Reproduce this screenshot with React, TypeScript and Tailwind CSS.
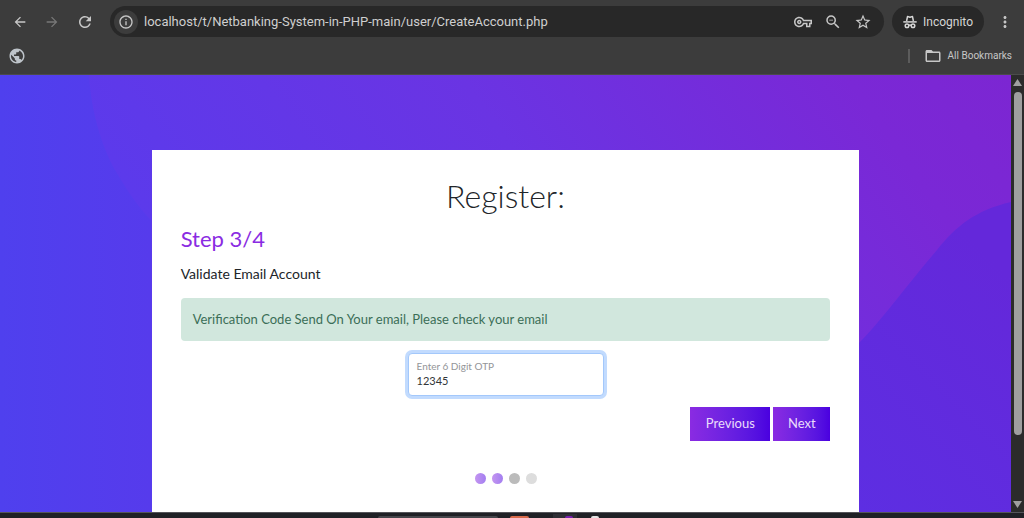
import { useState } from "react";
import {
  MdArrowBack,
  MdArrowForward,
  MdFolderOpen,
  MdInfoOutline,
  MdMoreVert,
  MdOutlineVpnKey,
  MdPublic,
  MdRefresh,
  MdStarBorder,
  MdZoomOut,
} from "react-icons/md";

const steps = [
  { id: 1, color: "bg-linear-to-r from-[#c495f0] to-[#a37ef0]" },
  { id: 2, color: "bg-linear-to-r from-[#c495f0] to-[#a37ef0]" },
  { id: 3, color: "bg-[#bbbbbb]" },
  { id: 4, color: "bg-[#dddddd]" },
];

function IncognitoIcon() {
  return (
    <svg viewBox="0 0 14 14" className="size-3.5" fill="none" stroke="currentColor" strokeWidth="1.5">
      <path d="M3.600 6 4.500 1.600 7 2.200l2.500-.6.9 4.400" strokeLinejoin="round" />
      <path d="M.3 6.900h13.400" />
      <circle cx="4" cy="10.800" r="1.800" />
      <circle cx="10" cy="10.800" r="1.800" />
      <path d="M5.800 10.400q1.200-.6 2.400 0" />
    </svg>
  );
}

function BrowserBar() {
  const [url, setUrl] = useState("localhost/t/Netbanking-System-in-PHP-main/user/CreateAccount.php");

  return (
    <header className="bg-[#3c3c3c] border-b border-[#4b4b4b] text-[#c7c7c7] font-[Roboto,sans-serif]">
      {/* Address row */}
      <div className="flex items-center pt-1.5 px-3">
        <button aria-label="Back" className="w-4 mr-4"><MdArrowBack className="size-4" /></button>
        <button aria-label="Forward" className="w-4 mr-4 text-[#777777]"><MdArrowForward className="size-4" /></button>
        <button aria-label="Reload" className="w-4 mr-4"><MdRefresh className="size-[18px]" /></button>
        <div className="flex flex-1 items-center h-[31px] rounded-full bg-[#282828] pl-1 pr-3 ml-0.5">
          <button aria-label="Site information" className="flex size-6 items-center justify-center rounded-full bg-[#3c3c3c]">
            <MdInfoOutline className="size-4" />
          </button>
          <input
            type="text"
            aria-label="Address"
            value={url}
            onChange={e => setUrl(e.target.value)}
            className="flex-1 min-w-0 ml-1.5 bg-transparent text-[13px] text-[#cfcfcf] focus:outline-none"
          />
          <div className="flex items-center gap-3">
            <button aria-label="Passwords"><MdOutlineVpnKey className="size-[18px]" /></button>
            <button aria-label="Zoom"><MdZoomOut className="size-[18px]" /></button>
            <button aria-label="Bookmark this page"><MdStarBorder className="size-[18px]" /></button>
          </div>
        </div>
        <button className="flex items-center gap-1.5 h-[31px] ml-2 rounded-full bg-[#282828] px-[11px] text-xs text-[#d6d6d6]">
          <IncognitoIcon />
          Incognito
        </button>
        <button aria-label="Menu" className="ml-3 -mr-0.5"><MdMoreVert className="size-[18px]" /></button>
      </div>

      {/* Bookmarks row */}
      <div className="flex items-center justify-between h-[37px] px-2">
        <button aria-label="Bookmark"><MdPublic className="size-[18px] text-[#bdc3c9]" /></button>
        <div className="flex items-center pr-1">
          <span className="w-0.5 h-3.5 mr-3.5 bg-[#5c5c5c]" />
          <button className="flex items-center gap-1.5 text-[10px]">
            <MdFolderOpen className="size-[18px]" />
            All Bookmarks
          </button>
        </div>
      </div>
    </header>
  );
}

function Backdrop() {
  return (
    <svg viewBox="0 0 1011 437" preserveAspectRatio="none" className="absolute inset-0 size-full" aria-hidden="true">
      <defs>
        <linearGradient id="base" x1="0" y1="0.3" x2="1" y2="0">
          <stop offset="0" stopColor="#573cee" />
          <stop offset="0.5" stopColor="#6a34e3" />
          <stop offset="0.85" stopColor="#7a28d6" />
          <stop offset="1" stopColor="#7c26d2" />
        </linearGradient>
        <linearGradient id="left" x1="0" y1="0" x2="1" y2="0">
          <stop offset="0" stopColor="#4f40ee" />
          <stop offset="1" stopColor="#563bec" />
        </linearGradient>
        <linearGradient id="right" x1="0" y1="1" x2="0.5" y2="0">
          <stop offset="0" stopColor="#5d2ee2" />
          <stop offset="1" stopColor="#6428da" />
        </linearGradient>
      </defs>
      <path fill="url(#base)" d="M0 0h1011v437H0z" />
      <path fill="url(#left)" d="M0 0h89c2 35 12 70 26 95 12 20 22 36 36 50v292H0z" />
      <path fill="url(#right)" d="M1011 127c-35 8-55 24-74 48-30 35-55 70-78 93v169h152z" />
    </svg>
  );
}

function Scrollbar() {
  return (
    <div className="flex flex-col items-center w-[13px] py-1 bg-[#2b2b2b]" aria-hidden="true">
      <svg viewBox="0 0 9 7" className="w-[9px] h-[7px]"><path d="M4.500 0 9 7H0z" fill="#9f9f9f" /></svg>
      <div className="flex-1 w-2 my-1.5">
        <div className="h-[85%] rounded-full bg-[#9f9f9f]" />
      </div>
      <svg viewBox="0 0 9 7" className="w-[9px] h-[7px]"><path d="M0 0h9L4.500 7z" fill="#9f9f9f" /></svg>
    </div>
  );
}

function Taskbar() {
  return (
    <footer className="flex items-end h-1.5 overflow-hidden border-t border-[#55555a] bg-[#202126]" aria-hidden="true">
      <div className="flex w-full items-end justify-center pr-12">
        <span className="w-30 h-0.5 rounded-t-full bg-[#45464b]" />
        <span className="w-[19px] h-0.5 ml-3 rounded-t-sm bg-[#d96b4c]" />
        <span className="flex items-end justify-end w-6 h-1 ml-6 pr-1 bg-[#2e2e34]">
          <span className="w-2 h-0.5 rounded-t-full bg-[#7a1fb0]" />
        </span>
        <span className="w-2 h-0.5 ml-3.5 rounded-t-full bg-[#e4e4e4]" />
      </div>
    </footer>
  );
}

export default function App() {
  const [otp, setOtp] = useState("12345");

  return (
    <div className="flex flex-col h-screen overflow-hidden">
      <BrowserBar />

      <div className="flex flex-1 min-h-0">
        <main className="relative flex flex-col flex-1 items-center pt-[75px] overflow-hidden font-[Lato,sans-serif]">
          <Backdrop />

          {/* Register form */}
          <form className="relative flex flex-col flex-1 w-7/10 bg-white px-[29px] pt-[26px]" onSubmit={e => e.preventDefault()}>
            <h1 className="text-center text-[32px] leading-10 font-light text-[#212529]">Register:</h1>
            <h2 className="mt-1 text-[22px] leading-[38px] font-normal text-[#8a2be2]">Step 3/4</h2>
            <p className="mt-1 text-sm leading-6 text-[#212529]">Validate Email Account</p>

            <div role="alert" className="mt-3 rounded-sm bg-[#d1e7dd] px-3 py-[11px] text-[13px] leading-[21px] text-[#3b6e57]">
              Verification Code Send On Your email, Please check your email
            </div>

            <div className="flex flex-col self-center shrink-0 mt-3 w-[196px] h-[43px] rounded-sm border border-[#a3c8fb] bg-white px-2 pt-1 ring-3 ring-[#c2dbfe]">
              <label htmlFor="otp" className="text-[10px] leading-4 text-[#939598]">Enter 6 Digit OTP</label>
              <input
                id="otp"
                type="text"
                maxLength={6}
                value={otp}
                onChange={e => setOtp(e.target.value)}
                className="w-full text-[11px] leading-3.5 text-[#333639] focus:outline-none"
              />
            </div>

            <div className="flex justify-end gap-[3px] mt-[11px] text-[13px] text-[#eadcfb]">
              <button type="button" className="w-20 h-[34px] bg-linear-to-r from-[#8a2be2] to-[#4a00e0]">Previous</button>
              <button type="submit" className="w-[57px] h-[34px] bg-linear-to-r from-[#8a2be2] to-[#4a00e0]">Next</button>
            </div>

            <div className="flex justify-center gap-1.5 mt-8">
              {steps.map(step => (
                <span key={step.id} className={`size-[11px] rounded-full ${step.color}`} />
              ))}
            </div>
          </form>
        </main>
        <Scrollbar />
      </div>

      <Taskbar />
    </div>
  );
}
